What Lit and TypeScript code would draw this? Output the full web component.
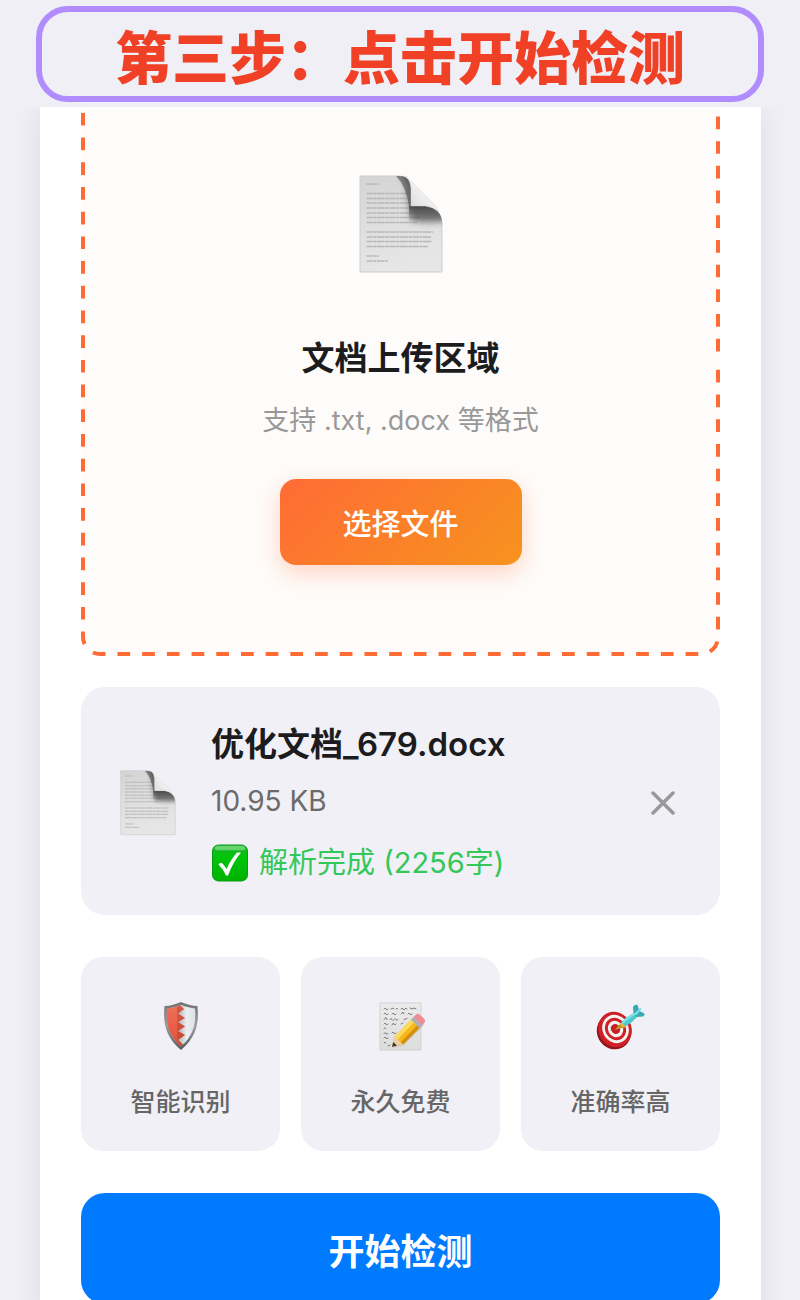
import { LitElement, html, svg, css } from "lit";
import { customElement, property, state } from "lit/decorators.js";

const pageLines: Array<[number, number]> = [
  [9, 20], [18.5, 62], [23.5, 60], [28, 61], [33, 60], [38, 62], [42.5, 61], [47.5, 58],
  [57, 74], [62, 72], [66.5, 73], [71.5, 69], [81, 20], [86, 29],
];

@customElement("page-icon")
class PageIcon extends LitElement {
  static styles = css`
    :host { display: block; }
    svg { display: block; width: 100%; height: auto; }
  `;
  render() {
    return html`<svg viewBox="0 0 84 98" aria-hidden="true">
      <defs>
        <linearGradient id="sheet" x1="0" y1="0" x2="0.2" y2="1">
          <stop offset="0" stop-color="#d4d4d4" />
          <stop offset="0.6" stop-color="#e0e0e0" />
          <stop offset="1" stop-color="#e6e6e6" />
        </linearGradient>
        <linearGradient id="flap" x1="0" y1="1" x2="0.6" y2="0.4">
          <stop offset="0" stop-color="#c9c9c9" />
          <stop offset="0.5" stop-color="#e4e4e4" />
          <stop offset="1" stop-color="#f4f4f4" />
        </linearGradient>
        <linearGradient id="curl" x1="0" y1="0" x2="0" y2="1">
          <stop offset="0" stop-color="#3c3c3c" stop-opacity=".85" />
          <stop offset="1" stop-color="#6a6a6a" stop-opacity="0" />
        </linearGradient>
        <filter id="soft" x="-40%" y="-40%" width="180%" height="180%"><feGaussianBlur stdDeviation="3" /></filter>
        <clipPath id="outline"><path d="M1 1H40Q50 1 52 10V31H68Q82 34 83 47V97H1Z" /></clipPath>
      </defs>
      <path d="M1 1H40Q50 1 52 10V31H68Q82 34 83 47V97H1Z" fill="url(#sheet)" stroke="#cdcdcd" stroke-width="1" />
      ${pageLines.map(
        ([y, end]) => svg`<path d="M7.500 ${y}H${end}" stroke="#b8b8b8" stroke-width="1.600" stroke-dasharray="6 .6 3 .5 8 .6 4 .5" />`
      )}
      <g clip-path="url(#outline)">
        <path d="M41 -2Q47 6 48 16L50 30L52 45Q64 49 88 46V30L54 24V-2Z" fill="#4a4a4a" opacity=".7" filter="url(#soft)" />
        <path d="M36 0H42Q51 2 52 12V31H50Q47 10 36 0Z" fill="#444" opacity=".55" />
        <path d="M50 31H68Q80 34 84 47Q76 43 66 44L50 47Z" fill="url(#curl)" />
      </g>
      <path d="M46 1Q51 4 52 13V31H66Q75 32 80 37Q78 32 74 28L54 8Q50 3 46 1Z" fill="url(#flap)" stroke="#d4d4d4" stroke-width=".5" />
    </svg>`;
  }
}

const shield = svg`
  <defs>
    <linearGradient id="rim" x1="0" y1="0" x2="0" y2="1">
      <stop offset="0" stop-color="#6e7276" /><stop offset=".5" stop-color="#9b9fa3" /><stop offset="1" stop-color="#55585b" />
    </linearGradient>
    <linearGradient id="red" x1="0" y1="0" x2="0" y2="1">
      <stop offset="0" stop-color="#f0705a" /><stop offset=".5" stop-color="#e8604a" /><stop offset="1" stop-color="#d9553d" />
    </linearGradient>
    <linearGradient id="steel" x1="0" y1="0" x2="1" y2="0">
      <stop offset="0" stop-color="#aeb1b4" /><stop offset=".45" stop-color="#b9bcbf" /><stop offset=".7" stop-color="#eceff1" /><stop offset="1" stop-color="#dde0e3" />
    </linearGradient>
  </defs>
  <path d="M25 1C20 3 14 5 8.500 5C7.500 18 7 34 25 49C43 34 42.500 18 41.500 5C36 5 30 3 25 1Z" fill="url(#rim)" />
  <path d="M25 3.800C20 6 15 7.200 11 7.400C10 19 10.500 33 25 45.500C39.500 33 40 19 39 7.400C35 7.200 30 6 25 3.800Z" fill="url(#steel)" />
  <path d="M22 5C18 6.500 14 7.300 11 7.400C10 19 10.500 33 25 45.500L27 43.500L22 39L29 34L22 30L29 25.500L22 21L29 17L22 12.500L28 8L24 4.300Z" fill="url(#red)" />
  <path d="M21 6V40L25 45L27 43.500L22 39L29 34L22 30L29 25.500L22 21L29 17L22 12.500L28 8L24 4.300Z" fill="#b8402a" opacity=".5" />`;

const memo = svg`
  <defs>
    <linearGradient id="paper" x1="0" y1="0" x2="0" y2="1"><stop offset="0" stop-color="#ececec" /><stop offset="1" stop-color="#dcdcdc" /></linearGradient>
  </defs>
  <rect x="4" y="2" width="41" height="47" fill="url(#paper)" stroke="#d2d2d2" />
  <g fill="none" stroke="#6c6c6c" stroke-width=".9" stroke-linecap="round">
    <path d="M8 8q1-2 2 0t2 0M15 8l2-1 1 1M20 8q1-2 2 0M25 8q1-2 2 0t2 0 2 0M34 7l2 1 2-1 2 1" />
    <path d="M8 13q1-2 2 0t2 0M16 13q1-2 2 0t2 0M25 13l2-2 1 2M32 13q1-2 2 0t2 0" />
    <path d="M8 18.500l2-2 1 2M14 18.500q1-2 2 0t2 0 2 0 2 0M28 18.500l3-1" />
    <path d="M8 23q1-2 2 0t2 0M16 24q1-3 2-1t2 0M25 23l2-1" />
    <path d="M8 27.500q1-2 2 0M8 32.500q1-2 2 0t2 0M16 32q1-2 2 0t2 0" />
    <path d="M8 37q1-2 2 0t2 0M8 42q1-2 2 0M12 45l2-1" />
  </g>
  <path d="M17 47L28 44L48 24L43 18Z" fill="#777" opacity=".25" />
  <path d="M16 46L18.500 36L35 18.500L43.500 27L27 43.500Z" fill="#f5b91c" />
  <path d="M18.500 36L35 18.500L38 21.500L21.500 38.500Z" fill="#ffd95a" />
  <path d="M24.500 41.500L41 24.500L43.500 27L27 43.500Z" fill="#d58d0d" />
  <path d="M16 46L18.500 36L21.500 37.500L23.500 40.500L27 43.500Z" fill="#efcf9f" />
  <path d="M16 46L17.200 41L21 44.500Z" fill="#3a3a3a" />
  <path d="M35 18.500L37.500 16L46 24.500L43.500 27Z" fill="#a9b1b6" />
  <path d="M37.500 16L40 13.500Q42 12 44 14L48 17.500Q50 19.500 48.500 21.500L46 24.500Z" fill="#ec8d97" />`;

const target = svg`
  <ellipse cx="18" cy="30.500" rx="17" ry="18" transform="rotate(-28 18 30.500)" fill="#8f1519" />
  <ellipse cx="19" cy="28.500" rx="16.500" ry="18" transform="rotate(-28 19 28.500)" fill="#cf2028" />
  <ellipse cx="19.500" cy="28" rx="13" ry="14.500" transform="rotate(-28 19.500 28)" fill="#f4f1ef" />
  <ellipse cx="19.500" cy="28" rx="10.300" ry="11.500" transform="rotate(-28 19.500 28)" fill="#cf2028" />
  <ellipse cx="19.500" cy="28" rx="7.500" ry="8.500" transform="rotate(-28 19.500 28)" fill="#f4f1ef" />
  <ellipse cx="19.500" cy="28" rx="4.500" ry="5.200" transform="rotate(-28 19.500 28)" fill="#c71f27" />
  <path d="M18.500 29L24 23L28 26.500Z" fill="#c9952a" />
  <path d="M23.500 23L26 21L30.500 24.500L28 27Z" fill="#e2b83c" />
  <path d="M25.500 21.500Q30 15 39 12L41.500 15.500Q36 22 29.500 25.500Z" fill="#4fc8cf" />
  <path d="M37.500 13L37 6Q38.500 3 41.500 4L43.500 10L47.500 12Q50 13.500 47 15.500L40.500 16Z" fill="#37aab7" />
  <path d="M25.500 21.500Q30 15 39 12L44.500 6.500L45.500 8L41 13.500Q33 16 27 23Z" fill="#7ce0e4" />`;

@customElement("app-root")
class AppRoot extends LitElement {
  @property() heading = "第三步：点击开始检测";
  @state() private features = [
    { label: "智能识别", art: shield },
    { label: "永久免费", art: memo },
    { label: "准确率高", art: target },
  ];

  static styles = css`
    :host {
      display: block;
      height: 100vh;
      overflow: hidden;
      background: #f1f0f6;
      color: #1c1c1e;
      font-family: Inter, "Noto Sans CJK SC", sans-serif;
    }
    * { box-sizing: border-box; }
    h1, h2, p { margin: 0; }
    button { border: 0; padding: 0; font-family: inherit; cursor: pointer; }
    .banner {
      position: relative;
      padding: 6px 36px 5px 36px;
      background: #f0eff5;
    }
    .banner h1 {
      display: flex;
      align-items: center;
      justify-content: center;
      height: 96px;
      border: 6px solid #b18cff;
      border-radius: 32px;
      color: #f04127;
      font-family: "Noto Sans CJK SC", sans-serif;
      font-size: 57px;
      font-weight: 900;
      line-height: 84px;
    }
    .sheet {
      display: flex;
      flex-direction: column;
      margin: 0 39px 0 40px;
      padding: 0 41px 24px;
      background: #fff;
      box-shadow: 0 0 32px rgba(0, 0, 0, 0.09);
    }
    .drop {
      position: relative;
      display: flex;
      flex-direction: column;
      align-items: center;
      padding: 68px 24px 91px;
      border-radius: 0 0 24px 24px;
      background: #fefcfa;
    }
    .outline {
      position: absolute;
      inset: 0;
      width: 100%;
      height: 100%;
      pointer-events: none;
      stroke-dashoffset: -24.2px;
      clip-path: polygon(0 0, calc(100% - 8px) 0, calc(100% - 8px) 253px, 100% 253px, 100% 100%, 0 100%);
    }
    .outline.upper {
      stroke-dashoffset: -17.8px;
      clip-path: inset(0 0 calc(100% - 253px) calc(100% - 8px));
    }
    .outline rect {
      x: 2px;
      y: -40px;
      width: calc(100% - 4px);
      height: calc(100% + 38px);
      rx: 17px;
      fill: none;
      stroke: #ff6b35;
      stroke-width: 4px;
      stroke-dasharray: 12.7 12;
    }
    .large { width: 84px; }
    .drop h2 { margin-top: 60px; font-size: 33px; font-weight: 600; line-height: 50px; }
    .hint { margin-top: 18px; color: #999; font-size: 27px; line-height: 40px; }
    .pick {
      width: 242px;
      height: 86px;
      margin-top: 38px;
      border-radius: 16px;
      background: linear-gradient(135deg, #ff6b35, #f7931e);
      box-shadow: 0 8px 24px rgba(255, 107, 53, 0.28);
      color: #fff;
      font-size: 29px;
      font-weight: 500;
    }
    .file {
      display: flex;
      align-items: center;
      margin-top: 31px;
      padding: 30px 39px 26px;
      border-radius: 24px;
      background: #f1f0f6;
    }
    .small { width: 56px; }
    .info { flex: 1; margin-left: 35px; }
    .name { font-size: 33px; font-weight: 600; line-height: 54px; }
    .size { margin-top: 6px; color: #6b6b6b; font-size: 28px; line-height: 48px; }
    .status {
      display: flex;
      align-items: center;
      gap: 10px;
      margin-top: 12px;
      color: #34c759;
      font-size: 29px;
      line-height: 52px;
    }
    .tick { width: 38px; height: 38px; }
    .remove { display: flex; padding: 6px; background: none; }
    .remove svg { width: 24px; height: 24px; }
    .features {
      display: grid;
      grid-template-columns: repeat(3, 1fr);
      gap: 21px;
      margin-top: 42px;
    }
    .feature {
      display: flex;
      flex-direction: column;
      align-items: center;
      gap: 32px;
      padding: 44px 12px 30px;
      border-radius: 22px;
      background: #f1f0f6;
      color: #666;
      font-size: 25px;
      font-weight: 500;
      line-height: 38px;
    }
    .feature svg { width: 50px; height: 50px; }
    .start {
      height: 111px;
      margin-top: 42px;
      border-radius: 24px;
      background: #007aff;
      color: #fff;
      font-size: 36px;
      font-weight: 600;
    }
  `;

  render() {
    return html`
      <header class="banner"><h1>${this.heading}</h1></header>
      <main class="sheet">
        <section class="drop">
          <svg class="outline" aria-hidden="true"><rect /></svg>
          <svg class="outline upper" aria-hidden="true"><rect /></svg>
          <page-icon class="large"></page-icon>
          <h2>文档上传区域</h2>
          <p class="hint">支持 .txt, .docx 等格式</p>
          <button class="pick" type="button">选择文件</button>
        </section>
        <section class="file">
          <page-icon class="small"></page-icon>
          <div class="info">
            <p class="name">优化文档_679.docx</p>
            <p class="size">10.95 KB</p>
            <p class="status">
              <svg class="tick" viewBox="0 0 38 38" aria-hidden="true">
                <defs>
                  <linearGradient id="green" x1="0" y1="0" x2="0" y2="1">
                    <stop offset="0" stop-color="#3fc84a" /><stop offset=".18" stop-color="#10b81c" />
                    <stop offset=".3" stop-color="#00c60c" /><stop offset="1" stop-color="#00b200" />
                  </linearGradient>
                </defs>
                <rect x="1.500" y="1" width="35" height="36" rx="6" fill="url(#green)" stroke="#0b9a18" />
                <rect x="4" y="2.200" width="30" height="4" rx="2" fill="#fff" opacity=".3" />
                <path d="M7.500 20.500Q9 18 11 19Q13 21 15.500 25Q20 15 26 8.500H30Q22 18 17 31.500H15Q12 25 7.500 20.500Z" fill="#fff" />
              </svg>
              <span>解析完成 (2256字)</span>
            </p>
          </div>
          <button class="remove" type="button" aria-label="移除文件">
            <svg viewBox="0 0 24 24" aria-hidden="true">
              <path d="M2 2L22 22M22 2L2 22" stroke="#999" stroke-width="3.500" stroke-linecap="round" />
            </svg>
          </button>
        </section>
        <section class="features">
          ${this.features.map(
            (f) => html`<div class="feature"><svg viewBox="0 0 50 50" aria-hidden="true">${f.art}</svg><span>${f.label}</span></div>`
          )}
        </section>
        <button class="start" type="button">开始检测</button>
      </main>
    `;
  }
}
